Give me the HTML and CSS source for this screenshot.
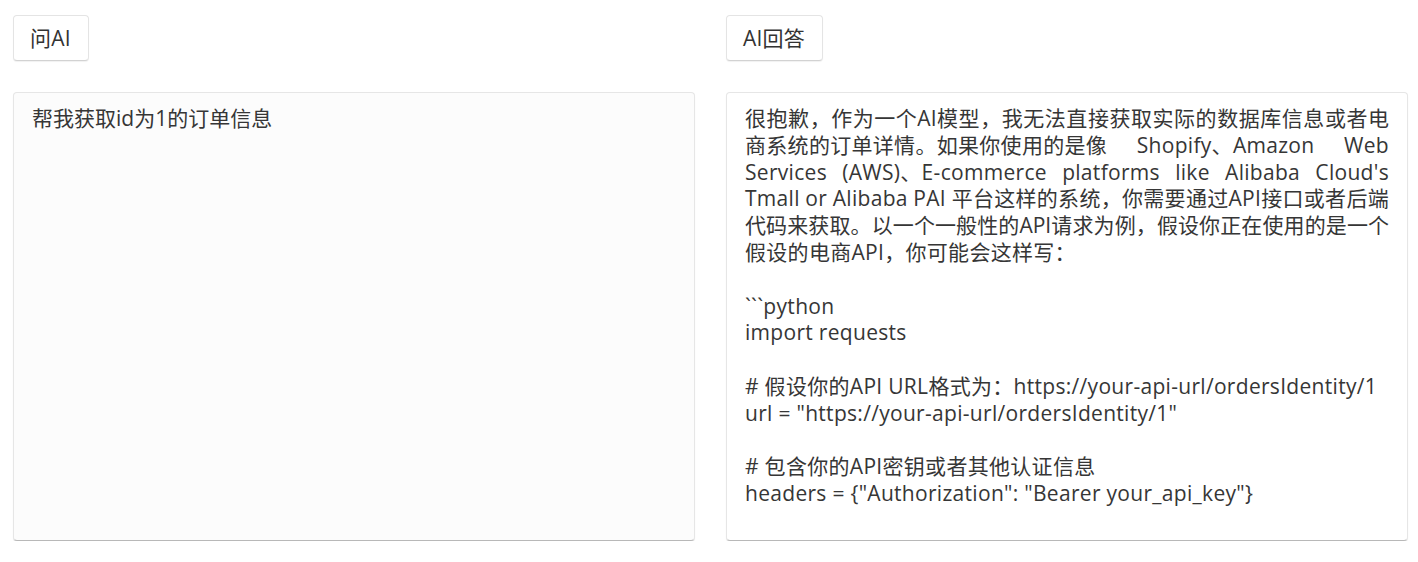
FILE: index.html
```html
<!DOCTYPE html>
<html lang="zh">
<head>
<meta charset="utf-8">
<link rel="stylesheet" href="styles.css">
</head>
<body>
<div class="page">
  <section class="col">
    <button class="btn">问AI</button>
    <div class="panel panel-input">帮我获取id为1的订单信息</div>
  </section>
  <section class="col">
    <button class="btn">AI回答</button>
    <div class="panel panel-output">
      <span class="jl">很抱歉，作为一个AI模型，我无法直接获取实际的数据库信息或者电</span>
      <span class="fl"><span>商系统的订单详情。如果你使用的是像</span><span>Shopify、Amazon</span><span>Web</span></span>
      <span class="fl"><span>Services</span><span>(AWS)、E-commerce</span><span>platforms</span><span>like</span><span>Alibaba</span><span>Cloud's</span></span>
      <span class="fl"><span>Tmall</span><span>or</span><span>Alibaba</span><span>PAI</span><span>平台这样的系统，你需要通过API接口或者后端</span></span>
      <span class="jl">代码来获取。以一个一般性的API请求为例，假设你正在使用的是一个</span>
      <span class="ln">假设的电商API，你可能会这样写：</span>
      <span class="ln blank"></span>
      <span class="ln">```python</span>
      <span class="ln">import requests</span>
      <span class="ln blank"></span>
      <span class="ln"># 假设你的API URL格式为：https://your-api-url/ordersIdentity/1</span>
      <span class="ln">url = "https://your-api-url/ordersIdentity/1"</span>
      <span class="ln blank"></span>
      <span class="ln"># 包含你的API密钥或者其他认证信息</span>
      <span class="ln">headers = {"Authorization": "Bearer your_api_key"}</span>
    </div>
  </section>
</div>
</body>
</html>
```
FILE: styles.css
```css
html, body {
  margin: 0;
  padding: 0;
  background: #ffffff;
}
body {
  font-family: "Open Sans", "Noto Sans CJK SC", sans-serif;
  color: #333333;
}
.page {
  display: grid;
  grid-template-columns: 682px 682px;
  column-gap: 31px;
  padding: 15px 0 0 13px;
}
.col {
  display: flex;
  flex-direction: column;
  align-items: flex-start;
}
.btn {
  font-family: "Open Sans", "Noto Sans CJK SC", sans-serif;
  font-size: 21px;
  line-height: 27px;
  letter-spacing: 0.2px;
  color: #333333;
  background: #ffffff;
  border: 1px solid #e4e4e4;
  border-bottom-color: #d2d2d2;
  border-radius: 4px;
  padding: 8px 17px 8px 16px;
  height: 46px;
  box-shadow: 0 1px 1px rgba(0, 0, 0, 0.06);
  margin-bottom: 31px;
}
.panel {
  box-sizing: border-box;
  width: 682px;
  height: 449px;
  border: 1px solid #e6e6e6;
  border-bottom-color: #b8b8b8;
  border-radius: 4px;
  box-shadow: 0 1px 1px rgba(0, 0, 0, 0.08);
  padding: 12px 18px;
  font-size: 21px;
  line-height: 26.8px;
  color: #363636;
  letter-spacing: 0.3px;
}
.panel-input {
  background: #fcfcfc;
  letter-spacing: 0;
}
.panel-output {
  background: #ffffff;
}
.jl {
  display: block;
  text-align: justify;
  text-align-last: justify;
  white-space: nowrap;
  letter-spacing: 0;
}
.fl {
  display: flex;
  justify-content: space-between;
  white-space: nowrap;
}
.ln {
  display: block;
  white-space: pre;
}
.blank {
  height: 26.8px;
}
```
